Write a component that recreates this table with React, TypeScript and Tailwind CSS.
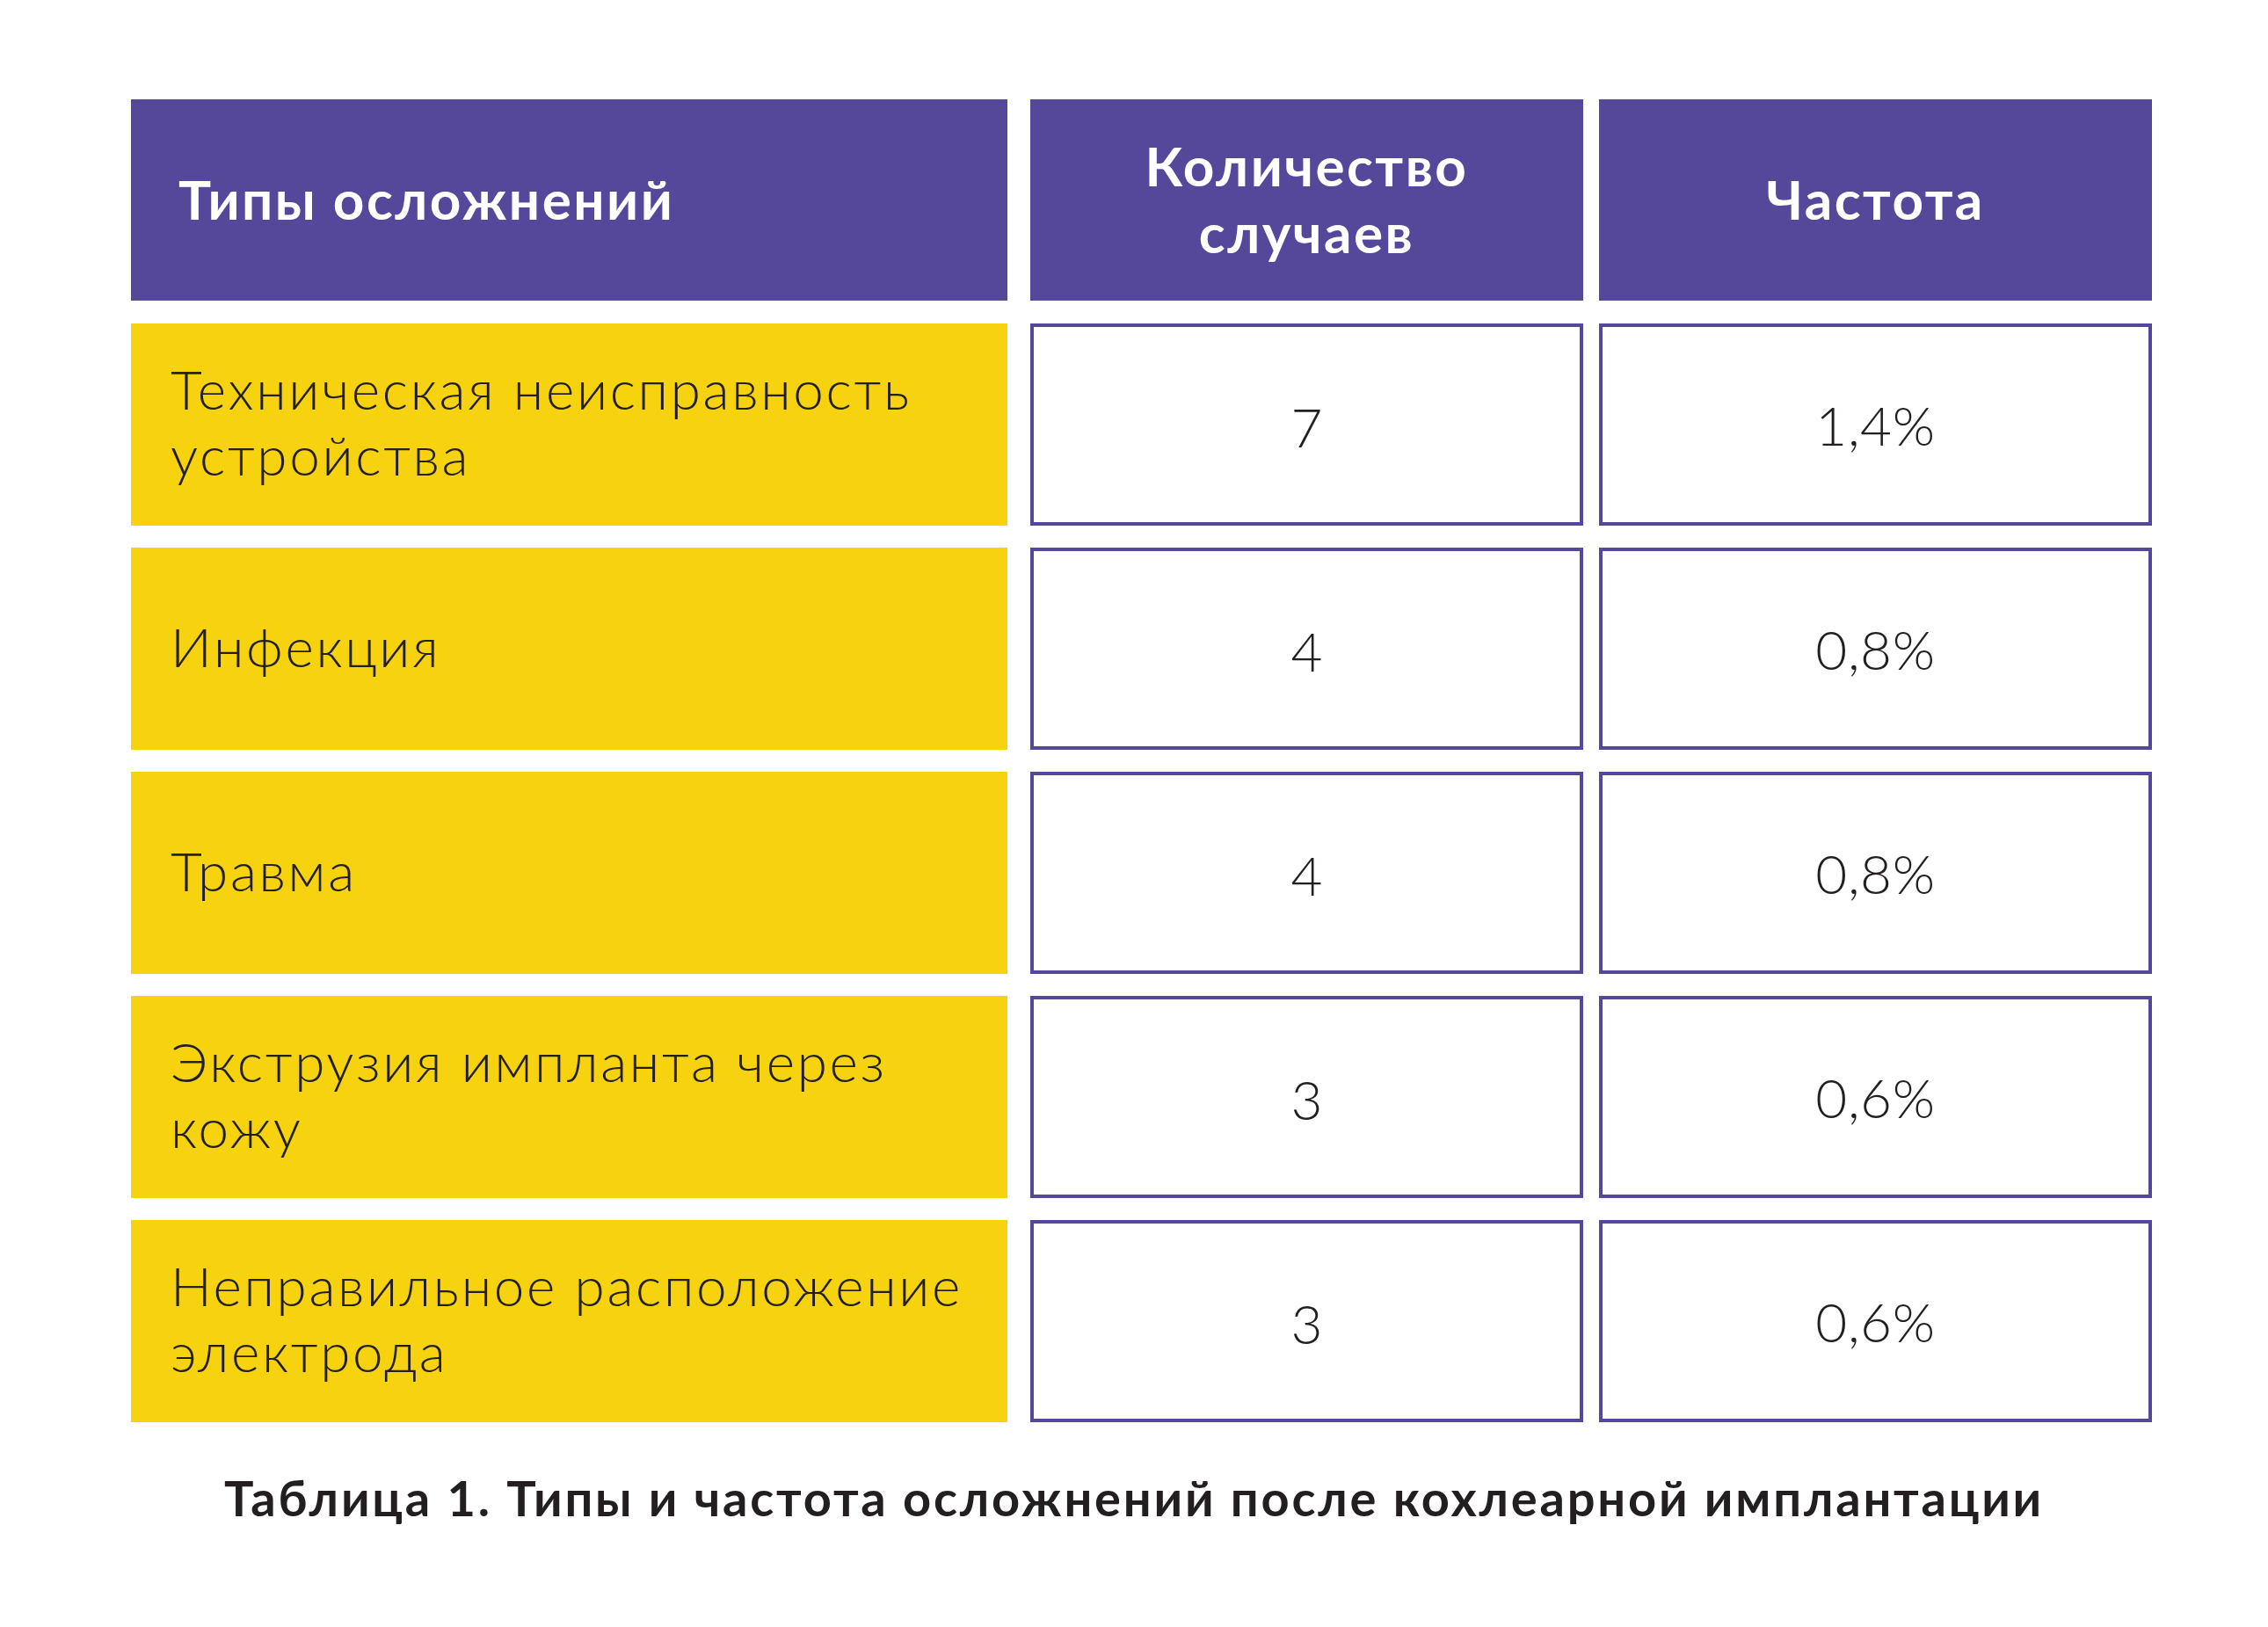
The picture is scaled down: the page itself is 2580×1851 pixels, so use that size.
import React from 'react';

const rows = [
  { name: ['Техническая неисправность', 'устройства'], count: '7', freq: '1,4%' },
  { name: ['Инфекция'], count: '4', freq: '0,8%' },
  { name: ['Травма'], count: '4', freq: '0,8%' },
  { name: ['Экструзия импланта через', 'кожу'], count: '3', freq: '0,6%' },
  { name: ['Неправильное расположение', 'электрода'], count: '3', freq: '0,6%' },
];

const font = { fontFamily: 'Lato, "Open Sans", sans-serif' };

const App: React.FC = () => (
  <div className="w-[2580px] h-[1851px] bg-white text-[#231f20]" style={font}>
    <div className="pt-[113px] pl-[149px]">
      {/* header */}
      <div className="flex h-[229px] text-white font-bold text-[62px] leading-[76px] tracking-[0.04em]">
        <div className="w-[997px] bg-[#55489a] flex items-center pl-[54px] pb-[4px]">Типы осложнений</div>
        <div className="w-[629px] ml-[26px] bg-[#55489a] flex items-center justify-center text-center pb-[4px]">
          Количество<br />случаев
        </div>
        <div className="w-[629px] ml-[18px] bg-[#55489a] flex items-center justify-center pb-[4px]">Частота</div>
      </div>

      <div className="mt-[26px] flex flex-col gap-[25px]">
        {rows.map((r, i) => (
          <div key={i} className="flex h-[230px] text-[62px] leading-[75px] font-light">
            <div className="w-[997px] bg-[#f7d30f] flex flex-col justify-center pl-[45px] pb-[6px] tracking-[0.043em]">
              {r.name.map((l, j) => (
                <span key={j}>{l}</span>
              ))}
            </div>
            <div className="w-[629px] ml-[26px] border-4 border-[#55489a] flex items-center justify-center pt-[4px]">{r.count}</div>
            <div className="w-[629px] ml-[18px] border-4 border-[#55489a] flex items-center justify-center tracking-[0.01em]">{r.freq}</div>
          </div>
        ))}
      </div>
    </div>

    <p className="mt-[52px] text-center font-bold text-[56px] leading-[67px] tracking-[0.05em] text-[#231f20]">
      Таблица 1. Типы и частота осложнений после кохлеарной имплантации
    </p>
  </div>
);

export default App;
